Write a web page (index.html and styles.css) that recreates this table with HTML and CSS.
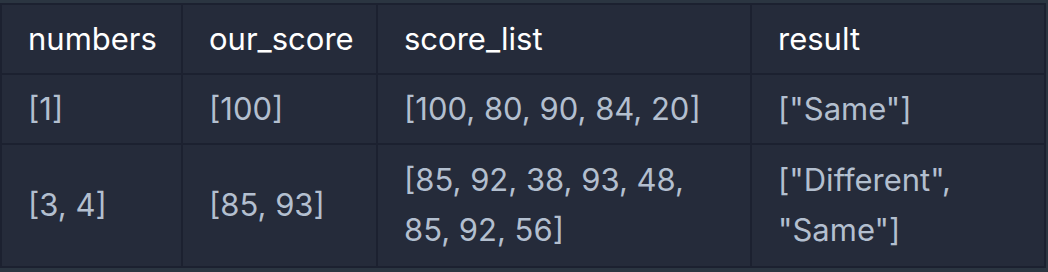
FILE: index.html
```html
<!DOCTYPE html>
<html>
<head>
<meta charset="utf-8">
<link rel="stylesheet" href="styles.css">
</head>
<body>
<table class="tbl">
  <colgroup>
    <col class="c1">
    <col class="c2">
    <col class="c3">
    <col class="c4">
  </colgroup>
  <thead>
    <tr>
      <th>numbers</th>
      <th>our_score</th>
      <th>score_list</th>
      <th>result</th>
    </tr>
  </thead>
  <tbody>
    <tr>
      <td>[1]</td>
      <td>[100]</td>
      <td>[100, 80, 90, 84, 20]</td>
      <td>["Same"]</td>
    </tr>
    <tr class="tall">
      <td>[3, 4]</td>
      <td>[85, 93]</td>
      <td>[85, 92, 38, 93, 48, 85, 92, 56]</td>
      <td>["Different", "Same"]</td>
    </tr>
  </tbody>
</table>
</body>
</html>
```
FILE: styles.css
```css
html, body {
  margin: 0;
  padding: 0;
  background: #2b3541;
}
body {
  padding: 3px 4px 0 0;
  font-family: Inter, "Noto Sans", sans-serif;
}
.tbl {
  border-collapse: collapse;
  background: #252b3a;
  border: 2px solid #1c2130;
  table-layout: fixed;
  width: 1044px;
  font-size: 31px;
}
.tbl th, .tbl td {
  box-sizing: border-box;
  border: 2px solid #1c2130;
  padding: 9px 26px;
  line-height: 50px;
  text-align: left;
  vertical-align: middle;
}
.tbl th {
  color: #ffffff;
  font-weight: 400;
}
.tbl td {
  color: #b3bfcf;
}
.tbl .tall td {
  padding-top: 10px;
  padding-bottom: 11px;
}
.c1 { width: 181px; }
.c2 { width: 195px; }
.c3 { width: 374px; }
.c4 { width: 294px; }
```
